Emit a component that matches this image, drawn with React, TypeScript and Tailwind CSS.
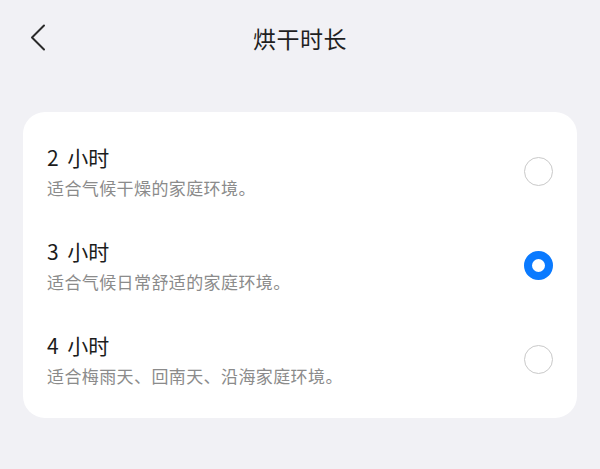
import React from "react";

const options = [
  { title: "2 小时", desc: "适合气候干燥的家庭环境。", selected: false },
  { title: "3 小时", desc: "适合气候日常舒适的家庭环境。", selected: true },
  { title: "4 小时", desc: "适合梅雨天、回南天、沿海家庭环境。", selected: false },
];

export default function App() {
  return (
    <div
      className="w-[600px] h-[469px] bg-[#f1f1f5] flex flex-col"
      style={{ fontFamily: '"Noto Sans CJK SC", "Noto Sans", sans-serif' }}
    >
      <div className="relative h-[76px] flex items-center justify-center">
        <button className="absolute left-[26px] top-[22px] w-[22px] h-[30px] flex items-center justify-center">
          <svg width="17" height="27" viewBox="0 0 17 27" fill="none">
            <path d="M15 1.5 L3 13.5 L15 25.5" stroke="#2a2a2a" strokeWidth="2" strokeLinecap="round" strokeLinejoin="round" />
          </svg>
        </button>
        <div className="text-[23px] leading-none text-[#1f1f1f] tracking-[0.5px]">烘干时长</div>
      </div>
      <div className="mt-[36px] mx-[23px] bg-white rounded-[22px] py-[12px]">
        {options.map((o) => (
          <div key={o.title} className="h-[94px] flex items-center pl-[24px] pr-[24px]">
            <div className="flex-1 flex flex-col">
              <div className="text-[21px] leading-[26px] text-[#1c1c1c] [word-spacing:4px]">{o.title}</div>
              <div className="mt-[8px] text-[17px] leading-[20px] text-[#8b8b8b] tracking-[0.4px]">{o.desc}</div>
            </div>
            {o.selected ? (
              <div className="w-[29px] h-[29px] rounded-full border-[8px] border-[#0a7aff] bg-white" />
            ) : (
              <div className="w-[29px] h-[29px] rounded-full border-[1.5px] border-[#c9c9c9] bg-white" />
            )}
          </div>
        ))}
      </div>
    </div>
  );
}
